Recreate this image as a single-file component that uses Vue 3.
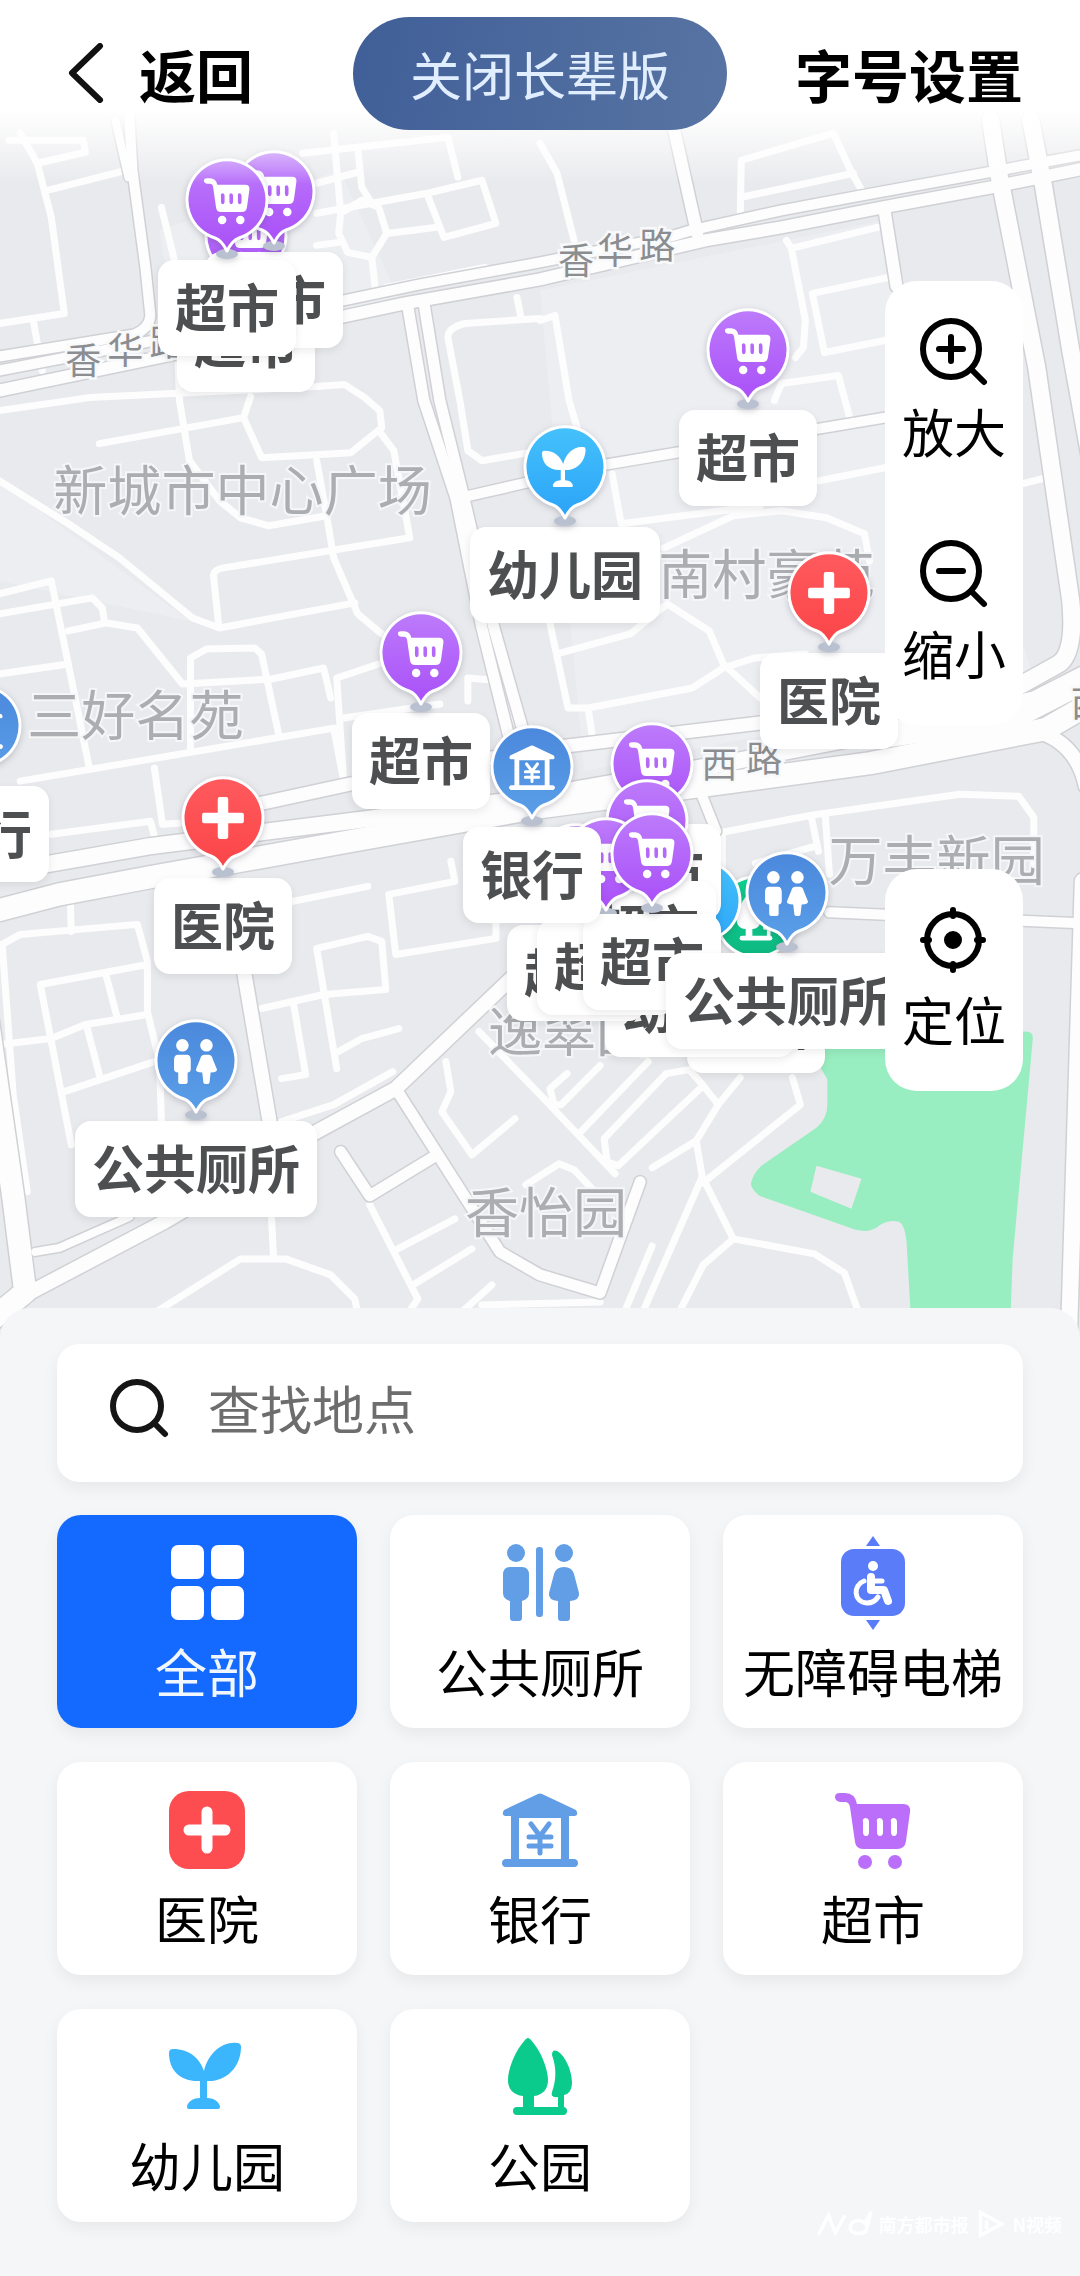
<template>
  <div class="map-page">
    <svg class="sprite" aria-hidden="true">
      <defs>
        <linearGradient v-for="g in gradients" :id="`grad-${g.id}`" :key="g.id" x1="0" y1="0" x2="0" y2="1">
          <stop offset="0" :stop-color="g.from" />
          <stop offset="1" :stop-color="g.to" />
        </linearGradient>
      </defs>
      <symbol id="icon-all" viewBox="0 0 76 76">
        <rect x="2" y="1" width="33" height="34" rx="7" />
        <rect x="42" y="1" width="33" height="34" rx="7" />
        <rect x="2" y="42" width="33" height="34" rx="7" />
        <rect x="42" y="42" width="33" height="34" rx="7" />
      </symbol>
      <symbol id="icon-toilet" viewBox="0 0 76 76">
        <circle cx="14" cy="9" r="9" />
        <path d="M8 23h12q7 0 7 8v18q0 6-7 8v17q0 3-3 3h-6q-3 0-3-3V57q-7-2-7-8V31q0-8 7-8z" />
        <rect x="34" y="3" width="7" height="70" rx="3" />
        <circle cx="62" cy="9" r="9" />
        <path d="M62 23q8 0 10 7l5 19q1 7-9 8v17q0 3-3 3h-6q-3 0-3-3V57q-10-1-9-8l5-19q2-7 10-7z" />
      </symbol>
      <symbol id="icon-people" viewBox="0 0 44 44">
        <circle cx="9" cy="7" r="6" />
        <path d="M5 16h8q4 0 4 5v9q0 3-3 3v9q0 2-2 2H7q-2 0-2-2v-9q-4 0-4-3v-9q0-5 4-5z" />
        <circle cx="32" cy="7" r="6" />
        <path d="M30 16h4q3 0 4 4l4 10q1 3-6 3l-1 9q0 2-2 2h-2q-2 0-2-2l-1-9q-7 0-6-3l4-10q1-4 4-4z" />
      </symbol>
      <symbol id="icon-lift" viewBox="0 0 76 76">
        <path d="M38-8l7 10H31zM38 86l-7-10h14z" />
        <rect x="6" y="5" width="64" height="67" rx="13" />
        <circle cx="38" cy="22" r="5" fill="#fff" />
        <g fill="none" stroke="#fff" stroke-linecap="round" stroke-linejoin="round">
          <path d="M36 33v13h13l4 11" stroke-width="8" />
          <path d="M37 37h10" stroke-width="5" />
          <path d="M29 37c-11 4-11 21 3 22 6 0 9-3 11-6" stroke-width="5" />
        </g>
      </symbol>
      <symbol id="icon-hospital" viewBox="0 0 76 76">
        <rect width="76" height="78" rx="20" />
        <path d="M38 21v36M20 39h36" stroke="#fff" stroke-width="11" stroke-linecap="round" />
      </symbol>
      <symbol id="icon-cross" viewBox="0 0 44 44">
        <path d="M17 4q0-2 2-2h6q2 0 2 2v13h13q2 0 2 2v6q0 2-2 2H27v13q0 2-2 2h-6q-2 0-2-2V27H4q-2 0-2-2v-6q0-2 2-2h13z" />
      </symbol>
      <symbol id="icon-bank" viewBox="0 0 76 76">
        <path d="M36 3q2-1 4 0l34 16q3 5-1 6h-6v43h6q3 1 3 4t-3 4H3q-3-1-3-4t3-4h6V25H3q-4-1-1-6zM17 27v41h42V27z" fill-rule="evenodd" />
        <path d="M29 33l9 12 9-12M38 45v17M27 46h22M27 55h22" fill="none" stroke="currentColor" stroke-width="5" stroke-linecap="round" />
      </symbol>
      <symbol id="icon-cart" viewBox="0 0 76 76">
        <path
          d="M5 2h5q10 0 12 11h46q8 0 7 8l-4 29q-1 8-9 8H28q-7 0-8-7l-5-35q-1-5-5-5H5q-5-1-5-5t5-4zM30 27q-3 1-2 4v10q0 4 3 4t3-4V31q0-4-4-4zM44 27q-3 1-2 4v10q0 4 3 4t3-4V31q0-4-4-4zM58 27q-3 1-2 4v10q0 4 3 4t3-4V31q0-4-4-4z"
          fill-rule="evenodd"
        />
        <circle cx="30" cy="71" r="7" />
        <circle cx="60" cy="71" r="7" />
      </symbol>
      <symbol id="icon-sprout" viewBox="0 0 76 76">
        <path d="M0 15q0-4 4-4c17 0 27 10 31 22C39 15 54 3 68 5q4 0 4 4c0 20-15 35-34 34v17c8 0 13 5 13 9q0 2-2 2H20q-2 0-2-2c0-4 5-9 13-9V43C12 44 0 33 0 15z" />
      </symbol>
      <symbol id="icon-park" viewBox="0 0 76 76">
        <path d="M23 2q3-4 6 0c10 11 17 29 17 40 0 9-5 15-14 16v13H21V58C11 57 6 51 6 42 6 31 13 13 23 2z" />
        <path d="M50 17q0-6 5-4c9 5 15 21 15 31 0 8-3 12-8 13v14h-6V59q-8 1-6-5c4-11 5-23 0-37z" />
        <rect x="11" y="69" width="54" height="8" rx="4" />
      </symbol>
    </svg>

    <section class="map" aria-label="地图">
      <svg class="map-canvas" viewBox="0 0 1080 1336" preserveAspectRatio="xMidYMin slice">
        <rect width="1080" height="1336" fill="#e9eaed" />
        <path class="block" d="M0 480l190 140-190-40zM540 290l344-70 150 460-450 90zM160 230l180-60 60 130-220 50z" />
        <path class="park" d="M820 1030h205q8 0 7 8l-20 218-2 54H910l-4-70q-2-18-8-20-12-3-22 6-8 5-21 2l-96-34q-10-8-8-14 2-8 10-16l55-38q11-9 11-24v-24l-7-12z" />
        <path class="park-hole" d="M816 1164l45 13-10 30-41-17z" />

        <g class="minor">
          <path v-for="(d, i) in lanes" :key="i" :d="d" />
        </g>
        <g class="casing">
          <path v-for="(r, i) in roads" :key="i" :d="r.d" :stroke-width="r.w + 3" />
        </g>
        <g class="road">
          <path v-for="(r, i) in roads" :key="i" :d="r.d" :stroke-width="r.w" />
        </g>

        <text v-for="p in places" :key="p.name" class="place" :x="p.x" :y="p.y">{{ p.name }}</text>
        <text v-for="(c, i) in roadNames" :key="i" class="road-name" :x="c.x" :y="c.y">{{ c.text }}</text>
      </svg>

      <button
        v-for="(m, i) in markers"
        :key="i"
        type="button"
        class="marker"
        :style="{ left: m.x + 'px', top: m.y + 'px' }"
      >
        <svg class="pin" viewBox="0 0 88 103">
          <ellipse cx="44" cy="97" rx="11" ry="5" fill="#b9c1d0" />
          <path
            d="M32 81A40 40 0 1 1 56 81C50 83 47 88 44 94 41 88 38 83 32 81z"
            :fill="`url(#grad-${kinds[m.kind].color})`"
            stroke="#fff"
            stroke-width="3"
            stroke-linejoin="round"
          />
          <use :href="`#icon-${kinds[m.kind].icon}`" x="21" y="20" width="46" height="46" />
        </svg>
        <span class="marker-label">{{ kinds[m.kind].name }}</span>
      </button>

      <header class="topbar">
        <button type="button" class="link-btn" @click="goBack">
          <svg class="chevron" viewBox="0 0 48 60"><path d="M43 3L15 30l28 27" /></svg>
          返回
        </button>
        <button type="button" class="elder-btn">关闭长辈版</button>
        <button type="button" class="link-btn link-end">字号设置</button>
      </header>

      <div class="tools">
        <div class="tool-card">
          <button type="button" class="tool">
            <svg viewBox="0 0 70 70"><circle cx="32" cy="32" r="28" /><path d="M52 52l13 13M32 20v24M20 32h24" /></svg>
            放大
          </button>
          <button type="button" class="tool">
            <svg viewBox="0 0 70 70"><circle cx="32" cy="32" r="28" /><path d="M52 52l13 13M20 32h24" /></svg>
            缩小
          </button>
        </div>
        <div class="tool-card">
          <button type="button" class="tool">
            <svg viewBox="0 0 70 70">
              <circle cx="34" cy="35" r="26" />
              <path d="M34 5v6M34 59v6M4 35h6M58 35h6" />
              <circle cx="34" cy="35" r="6" class="dot" />
            </svg>
            定位
          </button>
        </div>
      </div>
    </section>

    <section class="sheet">
      <label class="search">
        <svg class="search-icon" viewBox="0 0 60 60"><circle cx="28" cy="28" r="24" /><path d="M45 45l11 11" /></svg>
        <input v-model="keyword" type="text" placeholder="查找地点" aria-label="查找地点" />
      </label>

      <div class="categories">
        <button
          v-for="c in categories"
          :key="c.icon"
          type="button"
          class="category"
          :class="[`tint-${c.color}`, { active: c.name === selected }]"
          @click="selected = c.name"
        >
          <svg class="category-icon" viewBox="0 0 76 76"><use :href="`#icon-${c.icon}`" width="76" height="76" /></svg>
          <span>{{ c.name }}</span>
        </button>
      </div>

      <div class="credit">
        <svg viewBox="0 0 64 32"><path d="M2 28L13 6l8 20L32 6M56 24c-7 5-18 3-18-4s10-11 17-5l7-13-7 25" /></svg>
        <span>南方都市报</span>
        <svg class="credit-play" viewBox="0 0 32 32"><path d="M4 3l24 13L4 29zM11 12v10" /></svg>
        <span>N视频</span>
      </div>
    </section>
  </div>
</template>

<script setup>
import { ref } from "vue";

const keyword = ref("");
const selected = ref("全部");

const goBack = () => window.history.back();

const gradients = [
  { id: "purple", from: "#bd7bfb", to: "#a94ff8" },
  { id: "red", from: "#ff5a5e", to: "#fb4548" },
  { id: "blue", from: "#4b88dc", to: "#5a9fe8" },
  { id: "sky", from: "#45c1fb", to: "#2ba3f8" },
  { id: "green", from: "#0ad695", to: "#0fb37c" },
];

const categories = [
  { name: "全部", icon: "all", color: "white" },
  { name: "公共厕所", icon: "toilet", color: "blue" },
  { name: "无障碍电梯", icon: "lift", color: "indigo" },
  { name: "医院", icon: "hospital", color: "red" },
  { name: "银行", icon: "bank", color: "blue" },
  { name: "超市", icon: "cart", color: "purple" },
  { name: "幼儿园", icon: "sprout", color: "sky" },
  { name: "公园", icon: "park", color: "green" },
];

const kinds = {
  market: { name: "超市", icon: "cart", color: "purple" },
  hospital: { name: "医院", icon: "cross", color: "red" },
  bank: { name: "银行", icon: "bank", color: "blue" },
  toilet: { name: "公共厕所", icon: "people", color: "blue" },
  school: { name: "幼儿园", icon: "sprout", color: "sky" },
  park: { name: "公园", icon: "park", color: "green" },
};

// later markers are drawn over earlier ones
const markers = [
  { kind: "market", x: 246, y: 193 },
  { kind: "market", x: 274, y: 149 },
  { kind: "market", x: 227, y: 157 },
  { kind: "market", x: 748, y: 307 },
  { kind: "school", x: 565, y: 424 },
  { kind: "hospital", x: 829, y: 550 },
  { kind: "market", x: 421, y: 610 },
  { kind: "bank", x: -20, y: 683 },
  { kind: "hospital", x: 223, y: 775 },
  { kind: "toilet", x: 196, y: 1018 },
  { kind: "park", x: 756, y: 874 },
  { kind: "school", x: 700, y: 858 },
  { kind: "market", x: 576, y: 822 },
  { kind: "market", x: 652, y: 721 },
  { kind: "market", x: 647, y: 778 },
  { kind: "market", x: 606, y: 816 },
  { kind: "market", x: 652, y: 811 },
  { kind: "toilet", x: 787, y: 850 },
  { kind: "bank", x: 532, y: 724 },
];

const places = [
  { name: "新城市中心广场", x: 54, y: 510 },
  { name: "三好名苑", x: 28, y: 735 },
  { name: "南村豪苑", x: 658, y: 594 },
  { name: "万丰新园", x: 828, y: 880 },
  { name: "逸翠园", x: 488, y: 1050 },
  { name: "香怡园", x: 465, y: 1231 },
];

const roadNames = [
  { text: "香", x: 66, y: 373 },
  { text: "华", x: 108, y: 363 },
  { text: "路", x: 150, y: 355 },
  { text: "香", x: 558, y: 274 },
  { text: "华", x: 597, y: 264 },
  { text: "路", x: 639, y: 259 },
  { text: "西", x: 701, y: 777 },
  { text: "路", x: 746, y: 771 },
  { text: "西", x: 1070, y: 716 },
];

const roads = [
  { w: 10, d: "M129 100L133 170 146 267 151 315Q150 328 135 334L0 356" },
  { w: 8, d: "M116 120L129 177" },
  { w: 10, d: "M0 370L155 340 344 300 420 284 540 262 671 236 691 230 781 210 867 194 988 172 1080 155" },
  { w: 12, d: "M0 390L172 354 344 316 405 303 540 279 705 240 781 227 877 208 991 187 1080 169" },
  { w: 11, d: "M408 306L424 400 456 497 482 627 510 740" },
  { w: 11, d: "M424 302L440 400 464 497 494 627 526 740" },
  { w: 12, d: "M674 130L697 233" },
  { w: 12, d: "M884 210L896 286" },
  { w: 17, d: "M990 120L998 173 1036 367 1070 600Q1075 655 1056 664L1020 684" },
  { w: 17, d: "M1030 120L1043 187 1070 350 1090 460" },
  { w: 10, d: "M461 497L605 464 884 417" },
  { w: 13, d: "M258 803L350 783 540 748 760 722" },
  { w: 16, d: "M-5 872L150 845 350 820 520 798 720 763 900 728 1080 688" },
  { w: 22, d: "M-5 910L60 893 150 876 350 840 540 806 700 785 870 762 1045 728 1085 705" },
  { w: 26, d: "M880 734L1010 716 1090 675" },
  { w: 14, d: "M1036 730Q1076 742 1085 785" },
  { w: 10, d: "M829 911L1080 922" },
  { w: 10, d: "M700 790L716 830" },
  { w: 16, d: "M1082 880L1068 1340" },
  { w: 22, d: "M-14 1000L14 1195 26 1290 -10 1320" },
  { w: 14, d: "M28 1292L165 1220 317 1130 396 1087 506 982 540 950" },
  { w: 14, d: "M230 890L245 973 270 1120" },
  { w: 11, d: "M396 1087L468 1200 500 1250 540 1273 600 1291 640 1180" },
  { w: 11, d: "M341 1150L370 1194 434 1155" },
  { w: 8, d: "M36 1250L60 1246 130 1215" },
];

const lanes = [
  "M0 323L65 313 52 217 38 163 21 133M38 163L86 152 84 140H10M48 190L127 170M34 320L43 370",
  "M162 207L175 260 180 400 190 460 220 500 241 517 269 525 327 515 317 460",
  "M317 213L427 193 482 180 496 223 444 237 427 193M389 233L437 227M317 183L358 172",
  "M341 213L362 200 379 207 387 233 372 257 348 252 339 233zM334 133L341 213M358 147L362 187 372 203",
  "M303 153L448 137 458 177M372 257L376 293M386 287L485 267M317 245L339 242M517 297L521 317",
  "M540 318L465 323Q448 327 448 337L460 400 468 450 482 460 540 450",
  "M0 410L90 397 317 386 345 384 365 397 380 410 382 427 351 452 262 457 244 417 251 396M100 443L244 417",
  "M327 515L334 557 358 613 382 633M379 430L394 450 410 537 224 567Q214 569 214 575L219 623",
  "M0 480L69 523 120 557 193 617 220 627 355 602M0 593L52 580 69 663 90 767M0 613L93 597 103 607 105 620",
  "M69 630L107 622 138 627 183 683 272 678 324 667 331 697M0 673L69 663",
  "M191 750V657L207 648 255 647 262 653 279 733M21 780L334 727 344 780M379 663L337 677 344 780",
  "M155 767L163 823 179 822M52 833L151 820 158 847M344 717L440 703M468 700V677L503 680 517 723",
  "M540 143L557 173 574 240M740 213L741 160 833 133 850 170 865 197M741 197L853 173",
  "M786 240L791 248 805 320 803 347 795 357M877 227L791 248M888 277L812 293 824 352 884 340",
  "M540 320L555 315 569 400 578 430M774 400L781 383 838 375 850 420M612 473L621 523 760 505M819 480L884 467",
  "M664 547L733 515 781 510 826 517 864 533 869 560M667 603L709 630 723 663 760 697M667 603L630 633 557 653",
  "M550 623L568 707H588L692 687 723 667 754 657 805 653M588 707L593 740M540 750L620 742 760 720M1022 483L1046 477",
  "M722 870V831L811 814 959 793 1018 795 1033 816V873M811 816L818 850M825 816L829 873M755 862L814 845",
  "M479 1030L540 1093 615 1172M567 1072L550 1087 554 1103H561L600 1064M648 1060L578 1133",
  "M666 1072L604 1137 607 1160 618 1164 703 1084M666 1072L689 1068 703 1084 718 1103 696 1139 652 1166M718 1103L740 1076",
  "M696 1139L702 1175 733 1237 814 1252 844 1271 860 1316M703 1181L800 1103 792 1076M702 1175L640 1316",
  "M733 1237L703 1263 676 1316M526 1183L559 1162 574 1168 592 1187M652 1244L622 1316",
  "M3 943L21 933 138 923 148 960V1010L160 1060 162 1120M3 943L14 1093 28 1190M72 1143L41 983 148 963",
  "M107 975L117 1013M0 1043L52 1037 86 1023 148 1013M65 1090L155 1060M88 1027L100 1073M71 900L72 930",
  "M293 900L368 885M451 860L455 880 389 893 396 953 496 937V920M262 1007L324 993 386 988 382 940 368 935 317 947 337 1067",
  "M294 1003L306 1073 282 1077M339 1050L362 1037 399 1027M282 1120L334 1103 393 1070",
  "M446 1060L451 1090 442 1110 472 1153 515 1117M370 1203L418 1297 405 1316M398 1247L455 1217M413 1283L472 1247",
  "M460 1312L492 1283M482 1303L600 1300M272 1217L274 1257M155 1311L241 1257H286L331 1273 355 1297 358 1311",
];
</script>

<style>
body {
  margin: 0;
}
</style>

<style scoped>
.map-page {
  display: flex;
  flex-direction: column;
  min-height: 100vh;
  background: #f4f6f8;
  color: #000;
  font-family: "Noto Sans CJK SC", "Noto Sans", sans-serif;
  font-size: 52px;
  line-height: 72px;
}
button {
  padding: 0;
  border: none;
  background: none;
  color: inherit;
  font: inherit;
  white-space: nowrap;
  cursor: pointer;
}
svg {
  display: block;
  flex-shrink: 0;
}
.sprite {
  position: absolute;
  width: 0;
  height: 0;
}
symbol {
  overflow: visible;
}

/* Map */
.map {
  position: relative;
  flex: 1;
  min-height: 1120px;
  overflow: hidden;
  background: #e9eaed;
}
.map-canvas {
  position: absolute;
  inset: 0;
  width: 100%;
  height: 100%;
}
.block {
  fill: #edeef2;
}
.park {
  fill: #98eec0;
}
.park-hole {
  fill: #e9eaee;
}
.minor,
.casing,
.road {
  fill: none;
  stroke: #fdfdfe;
  stroke-linecap: round;
  stroke-linejoin: round;
}
.minor {
  stroke-width: 7px;
}
.casing {
  stroke: #d0d1d5;
}
.place {
  fill: #abadb1;
  font-size: 54px;
  stroke: #f5f6f8;
  stroke-width: 4px;
  paint-order: stroke;
}
.road-name {
  fill: #8b8d91;
  font-size: 36px;
  stroke: #f8f9fa;
  stroke-width: 5px;
  paint-order: stroke;
}

.marker {
  position: absolute;
  display: flex;
  flex-direction: column;
  align-items: center;
  transform: translateX(-50%);
}
.pin {
  width: 88px;
  height: 103px;
  fill: #fff;
  color: #fff;
  filter: drop-shadow(0 2px 3px rgba(60, 60, 80, 0.25));
}
.marker-label {
  padding: 10px 17px 14px;
  border-radius: 16px;
  background: #fff;
  color: #4d4f50;
  font-weight: 700;
  box-shadow: 0 3px 8px rgba(0, 0, 0, 0.08);
}

.topbar {
  position: absolute;
  inset: 0 0 auto;
  display: grid;
  grid-template-columns: 1fr auto 1fr;
  align-items: center;
  padding: 17px 57px 54px;
  background: linear-gradient(#fff 0, #fff 60%, rgba(255, 255, 255, 0) 100%);
  pointer-events: none;
}
.topbar button {
  pointer-events: auto;
}
.link-btn {
  display: flex;
  align-items: center;
  gap: 34px;
  padding-bottom: 2px;
  font-size: 57px;
  font-weight: 700;
}
.link-end {
  justify-content: flex-end;
}
.chevron {
  width: 48px;
  height: 60px;
  fill: none;
  stroke: #111;
  stroke-width: 6px;
  stroke-linecap: round;
  stroke-linejoin: round;
}
.elder-btn {
  padding: 21px 57px 20px;
  border-radius: 57px;
  background: linear-gradient(100deg, #405f98, #5874a3);
  color: #e0eeff;
}

.tools {
  position: absolute;
  top: 281px;
  right: 57px;
  display: flex;
  flex-direction: column;
  gap: 144px;
}
.tool-card {
  border-radius: 32px;
  background: #fff;
}
.tool {
  display: flex;
  flex-direction: column;
  align-items: center;
  gap: 8px;
  padding: 36px 17px;
}
.tool svg {
  width: 70px;
  height: 70px;
  fill: none;
  stroke: #000;
  stroke-width: 6px;
  stroke-linecap: round;
}
.tool .dot {
  fill: #000;
}

/* Bottom sheet */
.sheet {
  position: relative;
  display: flex;
  flex-direction: column;
  gap: 33px;
  margin-top: -30px;
  padding: 36px 57px 54px;
  border-radius: 30px 30px 0 0;
  background: #f4f6f8;
}
.search {
  display: flex;
  align-items: center;
  gap: 39px;
  padding: 28px 52px 38px;
  border-radius: 22px;
  background: #fff;
  box-shadow: 0 6px 16px rgba(0, 0, 0, 0.06);
}
.search-icon {
  width: 60px;
  height: 60px;
  fill: none;
  stroke: #151515;
  stroke-width: 6px;
  stroke-linecap: round;
}
.search input {
  flex: 1;
  min-width: 0;
  height: 72px;
  padding: 0;
  border: none;
  outline: none;
  background: none;
  color: #000;
  font: inherit;
}
.search input::placeholder {
  color: #6d6d6d;
  opacity: 1;
}
.categories {
  display: grid;
  grid-template-columns: repeat(3, 1fr);
  gap: 34px 33px;
}
.category {
  display: flex;
  flex-direction: column;
  align-items: center;
  gap: 15px;
  padding: 29px 0 21px;
  border-radius: 24px;
  background: #fff;
  box-shadow: 0 6px 16px rgba(0, 0, 0, 0.06);
}
.category.active {
  background: #146aff;
  color: #f0f7ff;
}
.category-icon {
  width: 76px;
  height: 76px;
  fill: currentColor;
  overflow: visible;
}
.tint-white .category-icon {
  color: #fff;
}
.category:not(.active).tint-white .category-icon {
  color: #146aff;
}
.tint-blue .category-icon {
  color: #619ee5;
}
.tint-indigo .category-icon {
  color: #5b7cf9;
}
.tint-red .category-icon {
  color: #fd4d50;
}
.tint-purple .category-icon {
  color: #bb6efa;
}
.tint-sky .category-icon {
  color: #3bb6fc;
}
.tint-green .category-icon {
  color: #0acb8c;
}

.credit {
  position: absolute;
  right: 18px;
  bottom: 34px;
  display: flex;
  align-items: center;
  gap: 6px;
  color: #fff;
  font-size: 18px;
  font-weight: 700;
  line-height: 36px;
}
.credit svg {
  width: 56px;
  height: 28px;
  fill: none;
  stroke: #fff;
  stroke-width: 4px;
}
.credit .credit-play {
  width: 32px;
}
</style>
